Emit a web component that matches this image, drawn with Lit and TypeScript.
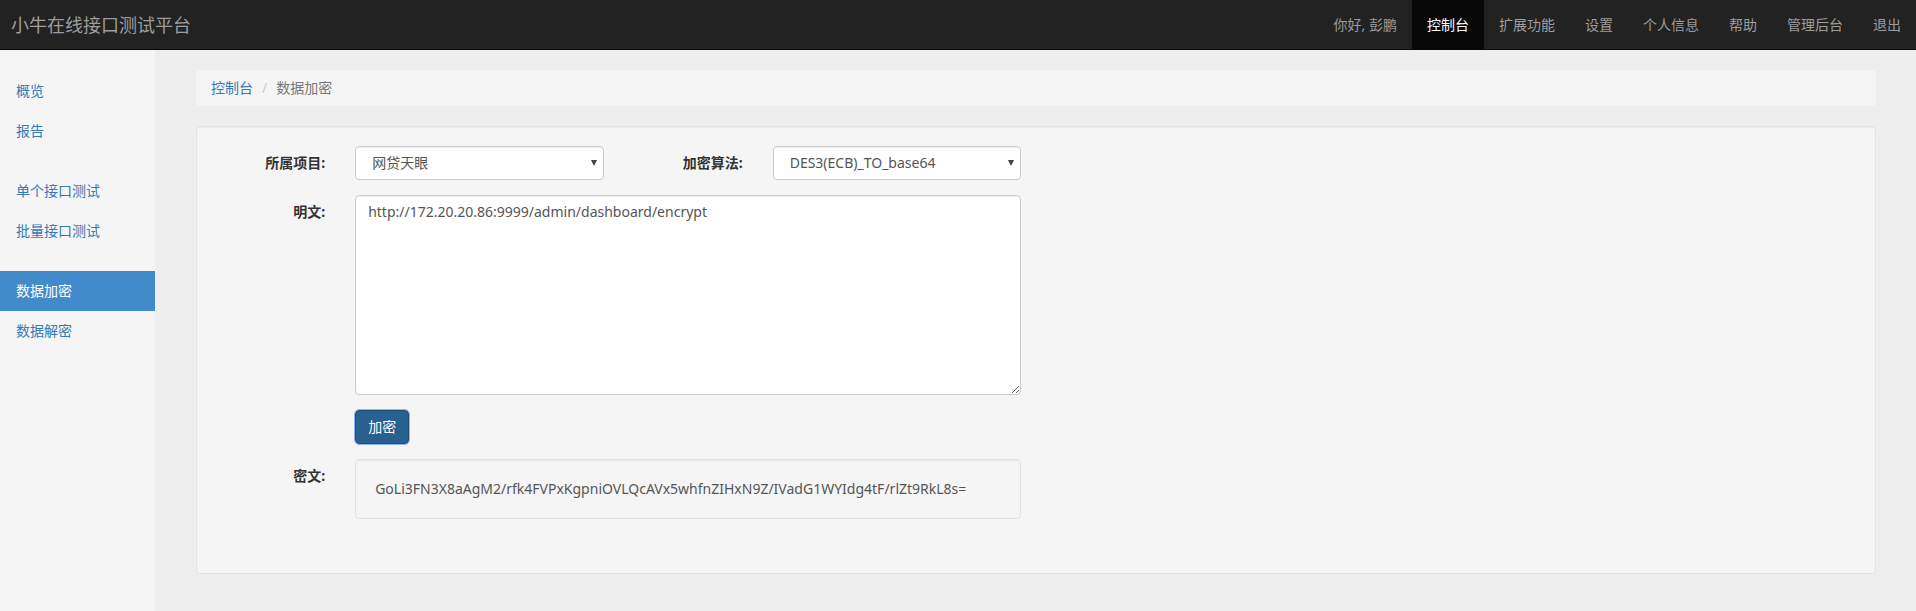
import { LitElement, html, css } from "lit";
import { customElement, state } from "lit/decorators.js";
import { classMap } from "lit/directives/class-map.js";

const NAV = ["控制台", "扩展功能", "设置", "个人信息", "帮助", "管理后台", "退出"];
const SIDE = [
  ["概览", "报告"],
  ["单个接口测试", "批量接口测试"],
  ["数据加密", "数据解密"],
];

@customElement("app-root")
export class AppRoot extends LitElement {
  static styles = css`
    :host {
      display: flex;
      flex-direction: column;
      min-height: 100vh;
      background: #eee;
      color: #333;
      font-family: "Noto Sans", "Noto Sans CJK SC", sans-serif;
      font-size: 14px;
      line-height: 20px;
    }
    * {
      box-sizing: border-box;
    }
    a {
      color: #337ab7;
      text-decoration: none;
    }
    ul,
    ol {
      list-style: none;
      margin: 0;
      padding: 0;
    }
    .navbar {
      display: flex;
      justify-content: space-between;
      height: 50px;
      background: #222;
      border-bottom: 1px solid #080808;
    }
    .navbar a {
      display: block;
      padding: 15px;
      color: #9d9d9d;
    }
    .navbar .brand {
      padding-left: 11px;
      font-size: 18px;
    }
    .menu {
      display: flex;
    }
    .navbar .menu .active {
      background: #080808;
      color: #fff;
    }
    .greeting {
      padding: 15px;
      color: #9d9d9d;
    }
    .body {
      display: flex;
      flex: 1;
    }
    .sidebar {
      flex: none;
      display: flex;
      flex-direction: column;
      gap: 20px;
      width: 156px;
      padding-top: 21px;
      background: #f5f5f5;
      border-right: 1px solid #eee;
    }
    .sidebar a {
      display: block;
      padding: 10px 16px;
    }
    .sidebar .active {
      background: #428bca;
      color: #fff;
    }
    main {
      flex: 1;
      min-width: 0;
      padding: 20px 40px;
    }
    .breadcrumb {
      display: flex;
      margin-bottom: 20px;
      padding: 8px 15px;
      background: #f5f5f5;
      border-radius: 4px;
    }
    .breadcrumb li + li {
      color: #777;
    }
    .breadcrumb li + li::before {
      content: "/";
      padding: 0 9px;
      color: #ccc;
    }
    .well {
      padding: 19px;
      background: #f5f5f5;
      border: 1px solid #e3e3e3;
      border-radius: 4px;
      box-shadow: inset 0 1px 1px rgba(0, 0, 0, 0.05);
    }
    .form {
      display: grid;
      grid-template-columns: repeat(12, minmax(0, 1fr));
      row-gap: 15px;
      margin: 0 -15px;
      padding-bottom: 35px;
    }
    .form > * {
      margin: 0 15px;
    }
    .label {
      padding-top: 7px;
      font-weight: 700;
      text-align: right;
      white-space: nowrap;
    }
    .narrow {
      grid-column: span 2;
    }
    .wide {
      grid-column: 2 / span 5;
    }
    .start {
      grid-column-start: 1;
    }
    .picker {
      display: grid;
      align-items: center;
    }
    .picker > * {
      grid-area: 1 / 1;
    }
    .picker svg {
      justify-self: end;
      margin-right: 7px;
      pointer-events: none;
    }
    .control {
      width: 100%;
      padding: 6px 12px;
      background: #fff;
      border: 1px solid #ccc;
      border-radius: 4px;
      box-shadow: inset 0 1px 1px rgba(0, 0, 0, 0.075);
      color: #555;
      font: inherit;
    }
    select.control {
      height: 34px;
      padding: 6px 16px;
      appearance: none;
    }
    textarea.control {
      display: block;
      height: 200px;
      resize: vertical;
    }
    .submit {
      justify-self: start;
      padding: 6px 12px;
      background: #286090;
      border: 1px solid #204d74;
      border-radius: 4px;
      outline: 1px solid #8fb4f5;
      color: #fff;
      font: inherit;
    }
    .result {
      min-height: 60px;
      color: #555;
      overflow-wrap: anywhere;
    }
  `;

  @state() private text = "http://172.20.20.86:9999/admin/dashboard/encrypt";
  @state() private cipher = "GoLi3FN3X8aAgM2/rfk4FVPxKgpniOVLQcAVx5whfnZIHxN9Z/IVadG1WYIdg4tF/rlZt9RkL8s=";

  private picker(id: string, value: string) {
    return html`<div class="picker narrow">
      <select class="control" id=${id}><option>${value}</option></select>
      <svg width="6" height="6" viewBox="0 0 6 6" aria-hidden="true"><path d="M0 0h6L3 6z" fill="#444" /></svg>
    </div>`;
  }

  render() {
    return html`
      <header class="navbar">
        <a class="brand" href="#">小牛在线接口测试平台</a>
        <nav class="menu">
          <span class="greeting">你好, 彭鹏</span>
          ${NAV.map((t, i) => html`<a href="#" class=${classMap({ active: i === 0 })}>${t}</a>`)}
        </nav>
      </header>
      <div class="body">
        <nav class="sidebar">
          ${SIDE.map(
            (group) => html`<ul>
              ${group.map((t) => html`<li><a href="#" class=${classMap({ active: t === "数据加密" })}>${t}</a></li>`)}
            </ul>`
          )}
        </nav>
        <main>
          <ol class="breadcrumb">
            <li><a href="#">控制台</a></li>
            <li>数据加密</li>
          </ol>
          <section class="well">
            <form class="form" @submit=${(e: Event) => e.preventDefault()}>
              <label class="label" for="project">所属项目:</label>
              ${this.picker("project", "网贷天眼")}
              <label class="label" for="algorithm">加密算法:</label>
              ${this.picker("algorithm", "DES3(ECB)_TO_base64")}
              <label class="label start" for="plain">明文:</label>
              <div class="wide">
                <textarea
                  class="control"
                  id="plain"
                  spellcheck="false"
                  .value=${this.text}
                  @input=${(e: Event) => (this.text = (e.target as HTMLTextAreaElement).value)}
                ></textarea>
              </div>
              <button class="submit wide" type="submit">加密</button>
              <label class="label start" for="cipher">密文:</label>
              <output class="well result wide" id="cipher">${this.cipher}</output>
            </form>
          </section>
        </main>
      </div>
    `;
  }
}
